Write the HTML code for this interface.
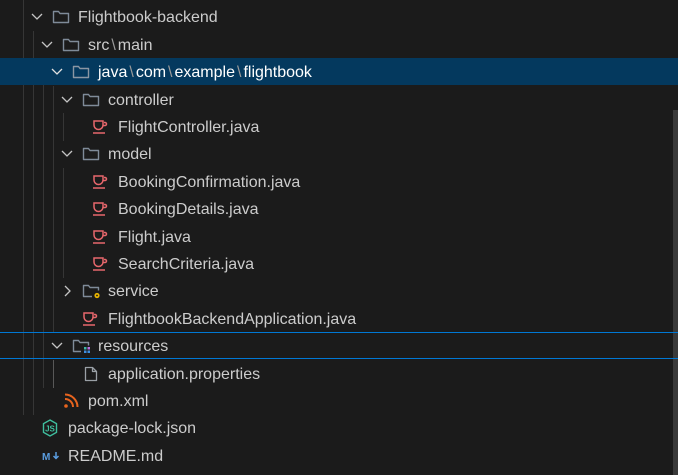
<!DOCTYPE html>
<html><head><meta charset="utf-8"><style>
html,body{margin:0;padding:0;width:678px;height:475px;overflow:hidden;background:#1b1b1b;}
body{position:relative;font-family:"Liberation Sans",sans-serif;font-size:16px;color:#cccccc;}
.row{position:absolute;left:0;width:678px;height:27.4px;}
.sel{background:#04395e;}
.focus{box-shadow:inset 0 1px 0 #0078d4, inset 0 -1px 0 #0078d4;}
.t{position:absolute;top:1px;line-height:27px;white-space:nowrap;}
.ic{position:absolute;}
.g{position:absolute;width:1px;background:#363636;}
.sep{color:#9a9a9a;margin:0 2px;}
.sb{position:absolute;left:673px;top:110px;width:5px;height:365px;background:#3a3a3a;}
</style></head><body>

<div class="g" style="left:23px;top:0;height:415px"></div>
<div class="g" style="left:33px;top:31px;height:384px"></div>
<div class="g" style="left:43px;top:58px;height:330px"></div>
<div class="g" style="left:53px;top:86px;height:247px"></div>
<div class="g" style="left:53px;top:360px;height:28px;background:#585858"></div>
<div class="g" style="left:63px;top:113px;height:28px"></div>
<div class="g" style="left:63px;top:168px;height:110px"></div>
<div class="sb"></div>

<div class="row" style="top:3.3px">
 <svg class="ic" style="left:31px;top:10px" width="12" height="8"><polyline points="1,1 6,6 11,1" fill="none" stroke="#c5c5c5" stroke-width="1.3"/></svg>
 <svg class="ic" style="left:52px;top:7px" width="18" height="14"><path d="M1.5 1.5h5l1.5 2h8.5v9h-15z" fill="none" stroke="#7f8b99" stroke-width="1.4" stroke-linejoin="round"/></svg>
 <span class="t" style="left:78px">Flightbook-backend</span>
</div>
<div class="row" style="top:30.7px">
 <svg class="ic" style="left:41px;top:10px" width="12" height="8"><polyline points="1,1 6,6 11,1" fill="none" stroke="#c5c5c5" stroke-width="1.3"/></svg>
 <svg class="ic" style="left:62px;top:7px" width="18" height="14"><path d="M1.5 1.5h5l1.5 2h8.5v9h-15z" fill="none" stroke="#7f8b99" stroke-width="1.4" stroke-linejoin="round"/></svg>
 <span class="t" style="left:88px">src<span class="sep">\</span>main</span>
</div>
<div class="row sel" style="top:58.1px">
 <svg class="ic" style="left:51px;top:10px" width="12" height="8"><polyline points="1,1 6,6 11,1" fill="none" stroke="#e0e0e0" stroke-width="1.3"/></svg>
 <svg class="ic" style="left:72px;top:7px" width="18" height="14"><path d="M1.5 1.5h5l1.5 2h8.5v9h-15z" fill="none" stroke="#8b96a3" stroke-width="1.4" stroke-linejoin="round"/></svg>
 <span class="t" style="left:98px;color:#fff">java<span class="sep">\</span>com<span class="sep">\</span>example<span class="sep">\</span>flightbook</span>
</div>
<div class="row" style="top:85.5px">
 <svg class="ic" style="left:61px;top:10px" width="12" height="8"><polyline points="1,1 6,6 11,1" fill="none" stroke="#c5c5c5" stroke-width="1.3"/></svg>
 <svg class="ic" style="left:82px;top:7px" width="18" height="14"><path d="M1.5 1.5h5l1.5 2h8.5v9h-15z" fill="none" stroke="#7f8b99" stroke-width="1.4" stroke-linejoin="round"/></svg>
 <span class="t" style="left:108px">controller</span>
</div>
<div class="row" style="top:112.9px">
 <svg class="ic" style="left:92px;top:6px" width="17" height="16"><g fill="none" stroke="#e8676c" stroke-width="1.5"><path d="M2 2h9v4a4.5 4.5 0 0 1-9 0z"/><path d="M12 3.5h1a1.5 1.5 0 0 1 0 3h-1.5"/><path d="M1 14h12"/></g></svg>
 <span class="t" style="left:118px">FlightController.java</span>
</div>
<div class="row" style="top:140.3px">
 <svg class="ic" style="left:61px;top:10px" width="12" height="8"><polyline points="1,1 6,6 11,1" fill="none" stroke="#c5c5c5" stroke-width="1.3"/></svg>
 <svg class="ic" style="left:82px;top:7px" width="18" height="14"><path d="M1.5 1.5h5l1.5 2h8.5v9h-15z" fill="none" stroke="#7f8b99" stroke-width="1.4" stroke-linejoin="round"/></svg>
 <span class="t" style="left:108px">model</span>
</div>
<div class="row" style="top:167.7px">
 <svg class="ic" style="left:92px;top:6px" width="17" height="16"><g fill="none" stroke="#e8676c" stroke-width="1.5"><path d="M2 2h9v4a4.5 4.5 0 0 1-9 0z"/><path d="M12 3.5h1a1.5 1.5 0 0 1 0 3h-1.5"/><path d="M1 14h12"/></g></svg>
 <span class="t" style="left:118px">BookingConfirmation.java</span>
</div>
<div class="row" style="top:195.1px">
 <svg class="ic" style="left:92px;top:6px" width="17" height="16"><g fill="none" stroke="#e8676c" stroke-width="1.5"><path d="M2 2h9v4a4.5 4.5 0 0 1-9 0z"/><path d="M12 3.5h1a1.5 1.5 0 0 1 0 3h-1.5"/><path d="M1 14h12"/></g></svg>
 <span class="t" style="left:118px">BookingDetails.java</span>
</div>
<div class="row" style="top:222.5px">
 <svg class="ic" style="left:92px;top:6px" width="17" height="16"><g fill="none" stroke="#e8676c" stroke-width="1.5"><path d="M2 2h9v4a4.5 4.5 0 0 1-9 0z"/><path d="M12 3.5h1a1.5 1.5 0 0 1 0 3h-1.5"/><path d="M1 14h12"/></g></svg>
 <span class="t" style="left:118px">Flight.java</span>
</div>
<div class="row" style="top:249.9px">
 <svg class="ic" style="left:92px;top:6px" width="17" height="16"><g fill="none" stroke="#e8676c" stroke-width="1.5"><path d="M2 2h9v4a4.5 4.5 0 0 1-9 0z"/><path d="M12 3.5h1a1.5 1.5 0 0 1 0 3h-1.5"/><path d="M1 14h12"/></g></svg>
 <span class="t" style="left:118px">SearchCriteria.java</span>
</div>
<div class="row" style="top:277.3px">
 <svg class="ic" style="left:64px;top:8px" width="8" height="12"><polyline points="1,1 6,6 1,11" fill="none" stroke="#c5c5c5" stroke-width="1.3"/></svg>
 <svg class="ic" style="left:82px;top:7px" width="20" height="16"><path d="M10 12.5h-8.5v-11h5l1.5 2h8.5v3" fill="none" stroke="#7f8b99" stroke-width="1.4" stroke-linejoin="round"/><circle cx="15" cy="11.5" r="2.6" fill="#e8b400"/><circle cx="15" cy="11.5" r="0.9" fill="#1b1b1b"/></svg>
 <span class="t" style="left:108px">service</span>
</div>
<div class="row" style="top:304.7px">
 <svg class="ic" style="left:82px;top:6px" width="17" height="16"><g fill="none" stroke="#e8676c" stroke-width="1.5"><path d="M2 2h9v4a4.5 4.5 0 0 1-9 0z"/><path d="M12 3.5h1a1.5 1.5 0 0 1 0 3h-1.5"/><path d="M1 14h12"/></g></svg>
 <span class="t" style="left:108px">FlightbookBackendApplication.java</span>
</div>
<div class="row focus" style="top:332.1px">
 <svg class="ic" style="left:51px;top:10px" width="12" height="8"><polyline points="1,1 6,6 11,1" fill="none" stroke="#c5c5c5" stroke-width="1.3"/></svg>
 <svg class="ic" style="left:72px;top:7px" width="20" height="16"><path d="M9 12.5h-7.5v-11h5l1.5 2h8.5v3" fill="none" stroke="#7f8b99" stroke-width="1.4" stroke-linejoin="round"/><rect x="12" y="8" width="2.5" height="2.5" fill="#3fb6a8"/><rect x="15.5" y="8" width="2.5" height="2.5" fill="#b86ee0"/><rect x="12" y="11.5" width="2.5" height="2.5" fill="#3f8fe0"/><rect x="15.5" y="11.5" width="2.5" height="2.5" fill="#3f8fe0"/></svg>
 <span class="t" style="left:98px">resources</span>
</div>
<div class="row" style="top:359.5px">
 <svg class="ic" style="left:84px;top:6px" width="14" height="16"><path d="M1.5 1.5h7l4 4v9h-11z M8.5 1.5v4h4" fill="none" stroke="#9aa0a6" stroke-width="1.3" stroke-linejoin="round"/></svg>
 <span class="t" style="left:108px">application.properties</span>
</div>
<div class="row" style="top:386.9px">
 <svg class="ic" style="left:63px;top:6px" width="16" height="16"><g fill="none" stroke="#e8641e" stroke-width="2"><path d="M2 6a8 8 0 0 1 8 8"/><path d="M2 1.5a12.5 12.5 0 0 1 12.5 12.5"/></g><circle cx="3" cy="13" r="1.8" fill="#e8641e"/></svg>
 <span class="t" style="left:88px">pom.xml</span>
</div>
<div class="row" style="top:414.3px">
 <svg class="ic" style="left:42px;top:5px" width="16" height="18"><path d="M8 1l6.5 3.7v8.6L8 17l-6.5-3.7V4.7z" fill="none" stroke="#3fbf9f" stroke-width="1.4"/><text x="8" y="12.5" font-size="8" font-family="Liberation Sans,sans-serif" fill="#3fbf9f" text-anchor="middle" font-weight="bold">JS</text></svg>
 <span class="t" style="left:68px">package-lock.json</span>
</div>
<div class="row" style="top:441.7px">
 <svg class="ic" style="left:42px;top:9px" width="20" height="10"><text x="0" y="9" font-size="10" font-family="Liberation Sans,sans-serif" font-weight="bold" fill="#5a9de0">M</text><path d="M14 1v6M11.5 5l2.5 2.5 2.5-2.5" fill="none" stroke="#5a9de0" stroke-width="1.5"/></svg>
 <span class="t" style="left:68px">README.md</span>
</div>
</body></html>
